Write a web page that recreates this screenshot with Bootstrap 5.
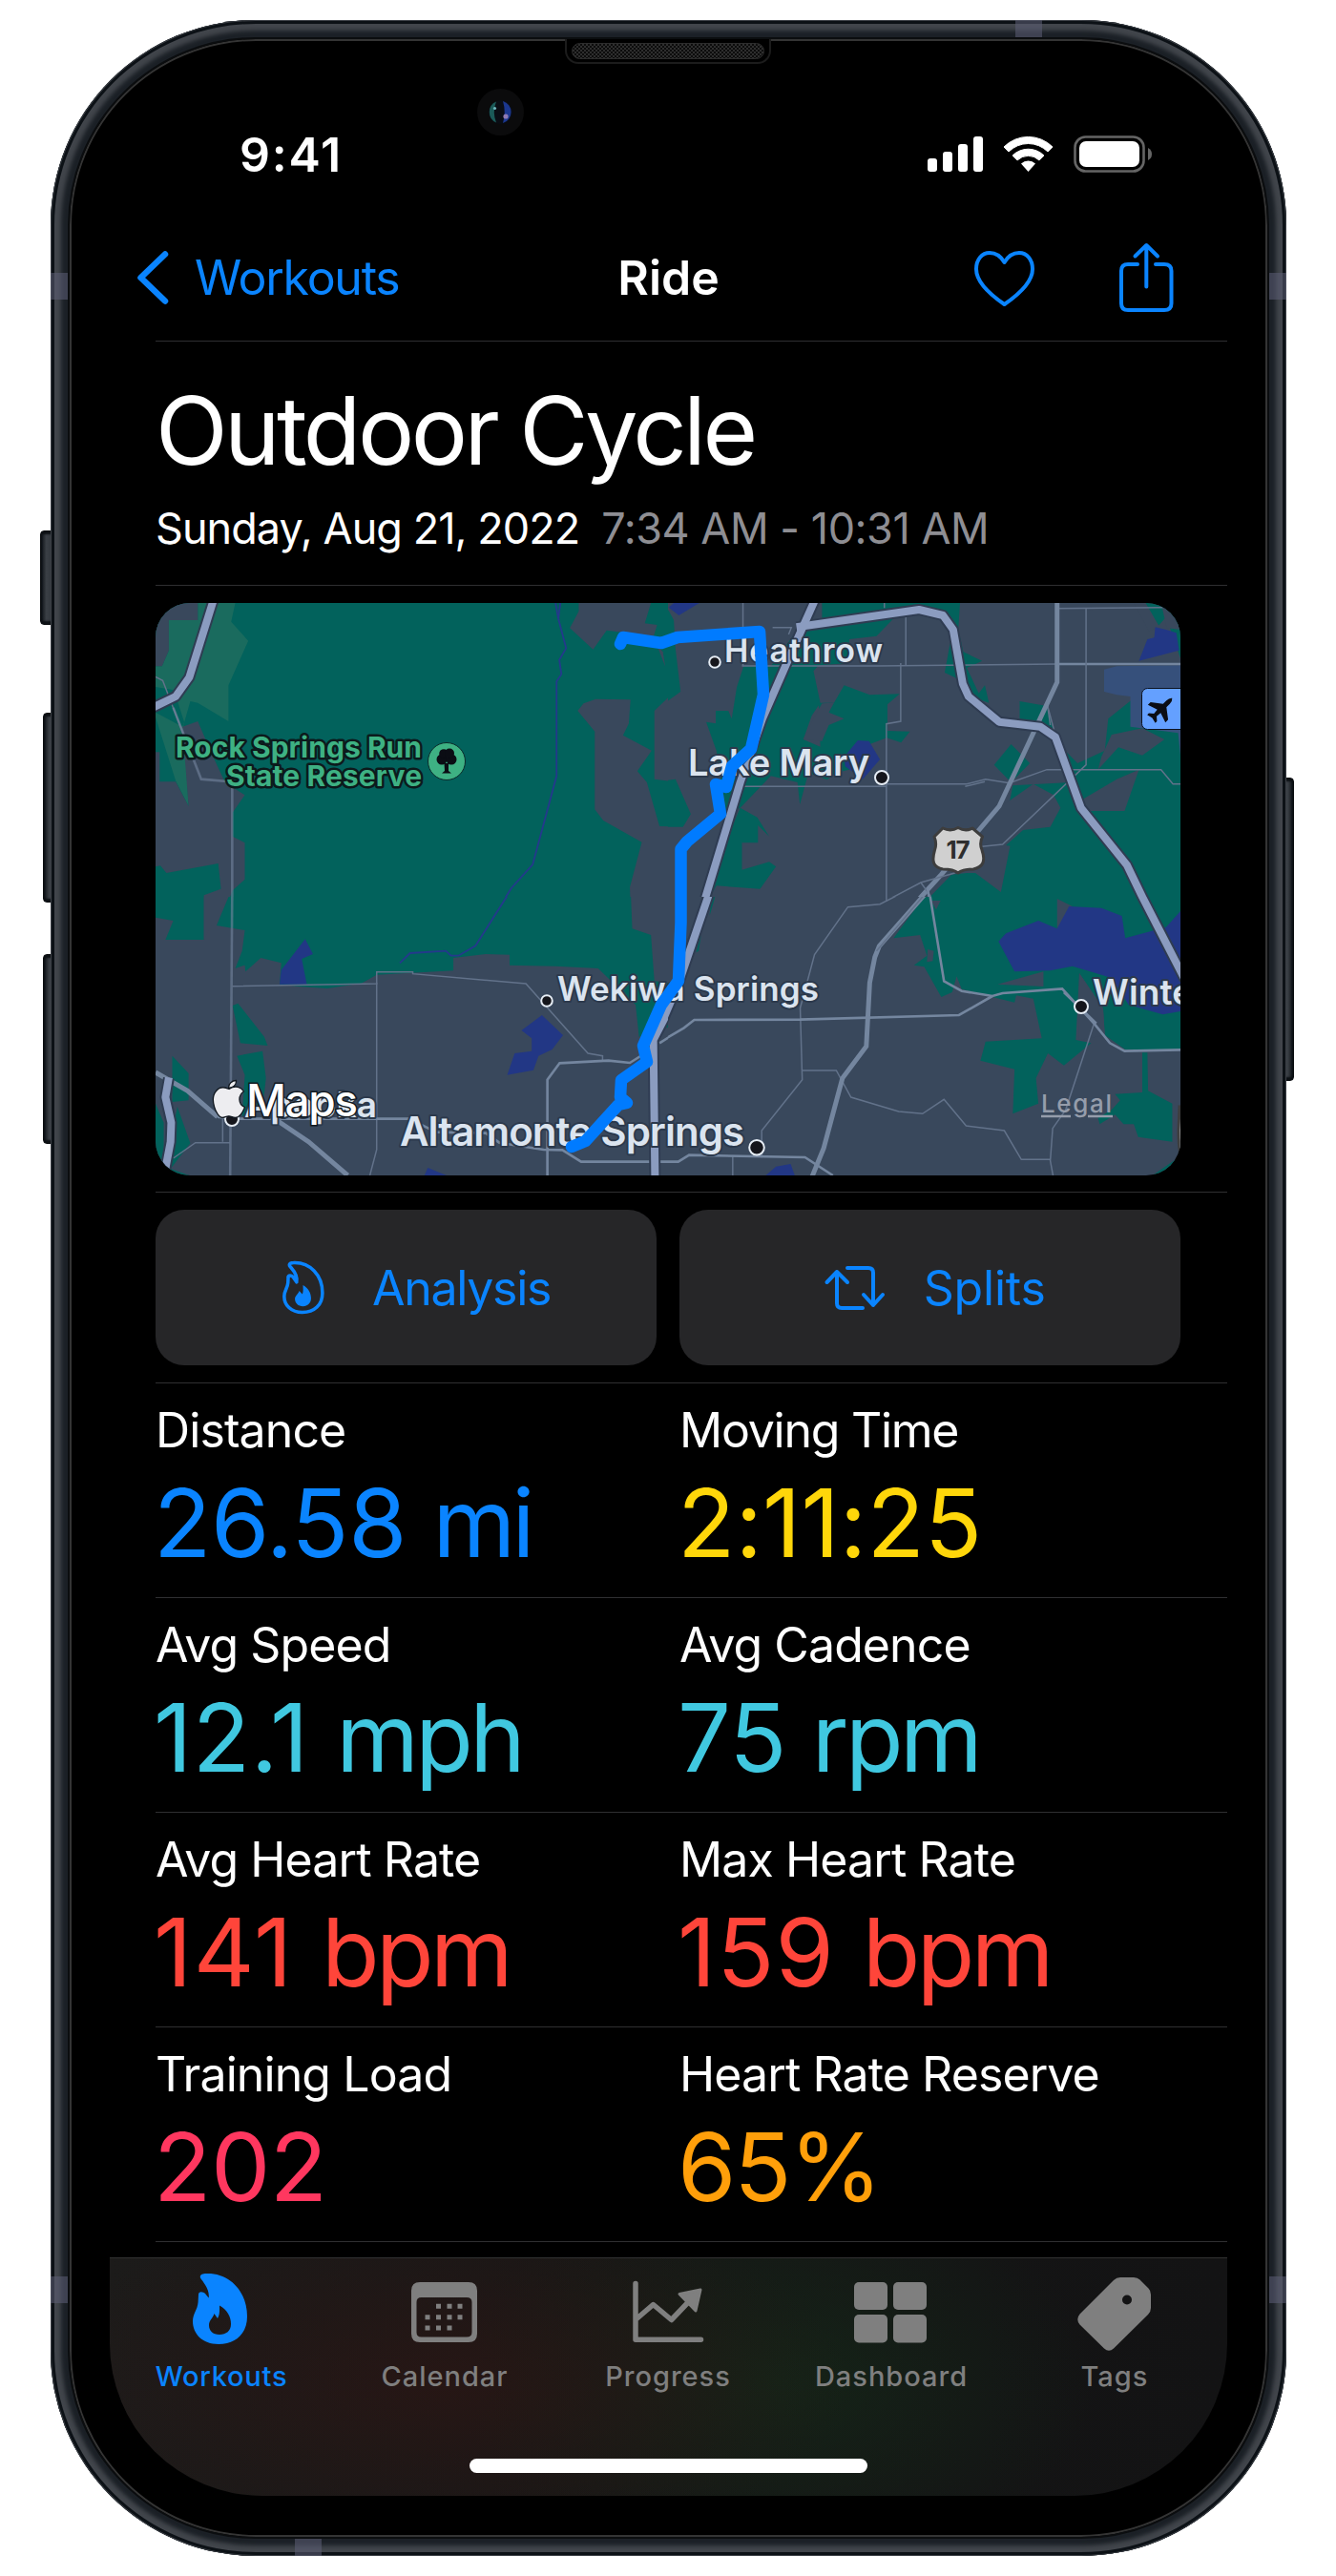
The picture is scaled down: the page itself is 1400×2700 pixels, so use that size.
<!DOCTYPE html>
<html lang="en">
<head>
<meta charset="utf-8">
<meta name="viewport" content="width=device-width, initial-scale=1">
<title>Ride – Outdoor Cycle</title>
<link href="https://cdn.jsdelivr.net/npm/bootstrap@5.3.0/dist/css/bootstrap.min.css" rel="stylesheet">
<style>
  :root { --ios-blue: #0a84ff; --hairline: #2f2f31; }
  body { background: #fff; font-family: Inter, "Liberation Sans", sans-serif; color: #fff; font-kerning: normal; }
  svg { display: block; flex: none; }

  /* device */
  .phone { width: 1295px; height: 2658px; margin: 21px 0 21px 53px; border-radius: 215px; padding: 18px;
    background: #1b2026;
    box-shadow: inset 0 0 0 1px #3c4046, inset 0 0 0 4px #0c1116, inset 0 0 4px 11px #41454b; }
  .bezel { border-radius: 197px; border: 2px solid #0b0d0f; box-shadow: inset 0 0 0 2px #343434; background: #000; }
  .side-key { position: absolute; z-index: -1; background: linear-gradient(90deg, #0c1014, #3a3f45 35%, #2b3036); border: 1px solid #0a0d10; border-radius: 4px; box-shadow: inset 0 3px 2px #0c1014, inset 0 -3px 2px #0c1014; }
  .key-mute { left: -11px; top: 535px; width: 18px; height: 99px; }
  .key-up { left: -8px; top: 726px; width: 18px; height: 199px; }
  .key-down { left: -8px; top: 979px; width: 18px; height: 199px; }
  .key-power { right: -8px; top: 794px; width: 18px; height: 318px; transform: scaleX(-1); }
  .antenna { position: absolute; background: #5c5f76; opacity: .55; }
  .antenna-v { width: 18px; height: 28px; }
  .antenna-h { width: 28px; height: 18px; }
  .speaker { position: absolute; left: 539px; top: 20px; width: 216px; height: 26px; border: 2px solid #1c1c1c; border-top: 0; border-radius: 0 0 14px 14px; background: #000; padding: 4px 5px; }
  .grille { height: 17px; border: 1px solid #2c2c2c; border-radius: 9px; background: repeating-conic-gradient(#2e2e2e 0 25%, #0c0c0c 0 50%) 0 0 / 4px 4px; }
  .lens { position: absolute; left: 447px; top: 72px; }

  /* screen */
  .screen { padding: 0 42px; }
  .status { height: 210px; padding: 91px 75px 0 136px; }
  .clock { font-size: 50px; font-weight: 600; line-height: 60px; letter-spacing: 1.8px; }
  .top-nav { height: 80px; padding: 0 53px 0 28px; font-size: 50px; line-height: 60px; }
  .back { color: var(--ios-blue); letter-spacing: -1.25px; gap: 25px; }
  .nav-actions { gap: 80px; }
  .inset { margin-left: 48px; }
  .rule { height: 1px; background: var(--hairline); }
  .h-title { font-size: 99px; line-height: 110px; letter-spacing: -3.6px; font-weight: 400; margin: 38px 0 18px; }
  .when { font-size: 45px; line-height: 60px; margin-bottom: 29px; gap: 23px; white-space: pre; }
  .when .day { letter-spacing: -.95px; }
  .when .span { letter-spacing: -.45px; color: #8e8e93; }
  .map { width: 1074px; height: 600px; border-radius: 36px; overflow: hidden; margin: 18px 0 17px; }
  .actions { width: 1074px; margin: 18px 0; gap: 24px; }
  .action { height: 163px; border: 0; border-radius: 30px; background: #262628; color: var(--ios-blue); font-size: 50px; line-height: 60px; padding: 0; }
  .action:hover { background: #2c2c2e; color: var(--ios-blue); }
  .a1 { padding-left: 132px; gap: 50px; letter-spacing: -1.3px; }
  .a2 { padding-left: 151px; gap: 39px; letter-spacing: -.2px; }
  .metrics { height: 225px; border-bottom: 1px solid var(--hairline); padding-top: 19px; }
  .metric { width: 549px; }
  .metric dt { font-size: 50px; line-height: 60px; font-weight: 400; letter-spacing: -.9px; margin-bottom: 12px; }
  .metric dd { font-size: 99px; line-height: 110px; margin: 0 0 0 -2px; letter-spacing: 0; white-space: nowrap; }
  .metric dd .unit { letter-spacing: -3.6px; }

  .tabs { height: 250px; margin-top: 16px; border-top: 1px solid #313131; border-radius: 0 0 160px 160px; position: relative;
    background: radial-gradient(430px 190px at 350px 130px, rgba(42,22,20,.8), transparent), radial-gradient(330px 210px at 700px 130px, rgba(20,38,24,.85), transparent), linear-gradient(90deg, #1c1b1a, #151515 55%, #131314); }
  .tab { width: 234px; padding-top: 14px; color: #7f7f7f; font-size: 29px; font-weight: 500; line-height: 36px; letter-spacing: 1px; text-decoration: none; }
  .tab span { margin-top: 8px; }
  .tab.current { color: var(--ios-blue); letter-spacing: .75px; }
  .home-bar { position: absolute; left: 377px; top: 210px; width: 417px; height: 15px; border-radius: 8px; background: #fff; }

  /* map */
  .gr { fill: #02625c; } .lg { fill: #1a6b5e; } .sl { fill: #39485c; } .wa { fill: #223785; } .ap { fill: #36507b; }
  .map path, .map polyline { vector-effect: non-scaling-stroke; }
  .rd { fill: none; stroke: #62728a; stroke-width: 1.5; }
  .md { fill: none; stroke: #74869f; stroke-width: 2.6; }
  .mj { fill: none; stroke: #74869f; stroke-width: 5; }
  .hc { fill: none; stroke: #2f3c52; stroke-width: 12; stroke-linejoin: round; }
  .hw { fill: none; stroke: #8b9cc0; stroke-width: 8; stroke-linejoin: round; }
  .cr { fill: none; stroke: #24398c; stroke-width: 1.8; }
  .place { fill: #dbe4ef; stroke: #2c394c; stroke-width: 4; paint-order: stroke; stroke-linejoin: round; font-weight: 600; }
  .park { fill: #3eb183; stroke: #0c1a1c; stroke-width: 5; paint-order: stroke; stroke-linejoin: round; font-weight: 700; font-size: 30px; }
  .dots circle { fill: #15161c; stroke: #e6edf5; stroke-width: 2; }
</style>
</head>
<body>
<div class="phone position-relative">
  <i class="side-key key-mute"></i><i class="side-key key-up"></i><i class="side-key key-down"></i><i class="side-key key-power"></i>
  <i class="antenna antenna-v" style="left:0;top:265px"></i><i class="antenna antenna-v" style="right:0;top:265px"></i>
  <i class="antenna antenna-v" style="left:0;top:2365px"></i><i class="antenna antenna-v" style="right:0;top:2365px"></i>
  <i class="antenna antenna-h" style="left:1011px;top:0"></i><i class="antenna antenna-h" style="left:256px;bottom:0"></i>

  <div class="bezel h-100">
    <div class="speaker"><div class="grille"></div></div>
    <svg class="lens" width="49" height="49" viewBox="0 0 49 49">
      <circle cx="24.500" cy="24.500" r="24.500" fill="#0b0b0c"/><circle cx="24.500" cy="24.500" r="12.500" fill="#0a0d14"/>
      <path d="M20 13.500A12 12 0 0 0 20 35.500A30 30 0 0 1 20 13.500Z" fill="#1b5a58"/>
      <path d="M27 13A12 12 0 0 1 27 36A40 40 0 0 0 27 13Z" fill="#1b378f"/>
      <circle cx="18.500" cy="20.500" r="1.600" fill="#6fb6bd"/><circle cx="30" cy="29" r="2.600" fill="#8f7ab4"/>
    </svg>

    <div class="screen">
      <div class="status d-flex justify-content-between align-items-start">
        <div class="clock">9:41</div>
        <svg width="245" height="60" viewBox="965 132 245 60">
          <g fill="#fff"><rect x="971" y="166" width="10" height="14" rx="3"/><rect x="987" y="159" width="10" height="21" rx="3"/><rect x="1003" y="151" width="10" height="29" rx="3"/><rect x="1019" y="143" width="10" height="37" rx="3"/></g>
          <path d="M1051 154A36 36 0 0 1 1102 154L1097 159A29 29 0 0 0 1056 159Z" fill="#fff" stroke="#fff" stroke-linejoin="round"/>
          <path d="M1060 163A23.500 23.500 0 0 1 1093 163L1088 168A16.500 16.500 0 0 0 1065 168Z" fill="#fff" stroke="#fff" stroke-linejoin="round"/>
          <path d="M1069 171.500A11 11 0 0 1 1084 171.500L1076.500 180Z" fill="#fff"/>
          <rect x="1125.500" y="143.500" width="72" height="36" rx="11" fill="none" stroke="#656565" stroke-width="2.600"/>
          <rect x="1130" y="148" width="63" height="27" rx="7" fill="#fff"/><path d="M1202 155Q1206 157 1206 161.500Q1206 166 1202 168Z" fill="#656565"/>
        </svg>
      </div>

      <nav class="top-nav d-flex align-items-center">
        <a class="back d-flex align-items-center text-decoration-none w-50" href="#">
          <svg width="36" height="60" viewBox="0 0 36 60"><path d="M30 5.500L4.500 30L30 54.500" fill="none" stroke="#0a84ff" stroke-width="6.500" stroke-linecap="round" stroke-linejoin="round"/></svg>
          <span>Workouts</span>
        </a>
        <div class="fw-semibold position-absolute start-50 translate-middle-x">Ride</div>
        <div class="nav-actions d-flex align-items-center justify-content-end w-50">
          <svg width="72" height="76" viewBox="0 -2 72 76"><path d="M35.500 64C18 52 6 40 6 27C6 17 12 10 20 10C27 10 32 14 35.500 20C39 14 44 10 51 10C59 10 65 17 65 27C65 40 53 52 35.500 64Z" fill="none" stroke="#0a84ff" stroke-width="4" stroke-linejoin="round"/></svg>
          <svg width="64" height="80" viewBox="0 0 64 80"><path d="M23 26H13Q6 26 6 33V67Q6 74 13 74H51Q58.500 74 58.500 67V33Q58.500 26 51 26H42M32.300 49.500V7M20.500 17.500L32.300 6L44 17.500" fill="none" stroke="#0a84ff" stroke-width="4" stroke-linecap="round" stroke-linejoin="round"/></svg>
        </div>
      </nav>

      <main class="inset">
        <div class="rule" style="margin-top:26px"></div>
        <h1 class="h-title">Outdoor Cycle</h1>
        <div class="when d-flex"><span class="day">Sunday, Aug 21, 2022</span><span class="span">7:34 AM - 10:31 AM</span></div>
        <div class="rule"></div>

        <div class="map">
          <svg width="1074" height="600" viewBox="163 632 1074 600" font-family="Inter, sans-serif">
            <rect x="163" y="632" width="1074" height="600" class="sl"/>

            <svg x="163" y="632" width="537" height="308" viewBox="36 36 1504 924" preserveAspectRatio="none">
              <rect class="gr" x="36" y="36" width="1504" height="924"/>
              <polygon class="lg" points="160,36 270,36 258,95 308,155 250,295 250,408 160,350 138,345 118,420 133,675 95,595 36,395 36,235 55,235 75,185 75,90 160,90"/>
              <polygon class="gr" points="36,300 90,310 120,410 115,425 36,380"/>
              <polygon class="sl" points="36,36 160,36 160,90 75,90 75,185 55,235 36,235"/>
              <polygon class="sl" points="115,425 160,408 205,520 240,600 298,640 262,695 262,770 298,790 298,905 262,940 245,990 178,990 178,955 228,935 220,855 68,885 50,862 36,865 36,505 48,505 48,598 95,598 133,675"/>
              <polygon class="sl" points="1278,36 1490,36 1472,100 1508,105 1498,140 1360,122 1320,182 1252,115 1278,62"/>
              <polygon class="sl" points="1275,375 1292,352 1328,338 1430,340 1425,415 1408,452 1492,500 1450,565 1478,600 1515,738 1568,740 1568,990 1430,990 1428,930 1463,788 1350,720 1325,685 1325,440"/>
              <polygon class="sl" points="1568,305 1500,375 1500,590 1555,598 1568,590"/>
              <polygon class="sl" points="1508,170 1532,236 1525,190"/>
              <polyline class="cr" points="1210,36 1218,85 1241,178 1221,215 1227,260 1213,283 1213,580 1143,858 1080,933 1035,1010"/>
              <polyline class="cr" points="1224,36 1218,85"/>
              <polyline class="rd" points="36,268 57,280 118,450"/>
              <polyline class="md" stroke-opacity=".6" points="88,365 170,590 261,598 261,980"/>
              <polyline class="hc" points="208,20 135,270 95,330 30,364"/><polyline class="hw" points="208,20 135,270 95,330 30,364"/>
            </svg>

            <svg x="700" y="632" width="537" height="308" viewBox="28 36 1504 924" preserveAspectRatio="none">
              <g class="gr">
                <polygon points="0,36 30,60 45,90 50,180 65,315 0,365"/>
                <polygon points="0,598 50,590 95,700 72,740 0,740"/>
                <polygon points="415,110 690,85 640,140 560,150 560,225 470,232 455,250 475,350 450,390 425,465 475,488 470,350 515,350 545,295 620,325 708,322 672,355 672,438 738,440 712,475 670,460 570,500 560,560 520,570 495,592 440,570 415,670 408,600 330,580 240,680 200,700 170,500 140,410 168,415 168,375 205,375 215,400 230,300 250,235 330,235"/>
                <polygon points="480,36 885,36 880,120 895,190 950,218 905,240 940,320 958,295 970,350 930,335 870,270 840,255 865,110 830,70 770,50 480,90"/>
                <polygon points="240,680 290,710 325,770 292,735 292,790 245,790 245,875 325,850 345,865 298,935 170,925 130,1000 110,1000"/>
                <polygon points="1060,345 1140,360 1160,440 1100,420 1060,400"/>
                <polygon points="1405,36 1532,36 1532,210 1490,80 1465,110 1440,110"/>
                <polygon points="1035,480 1090,540 1035,600 985,545"/>
                <polygon points="1040,610 1210,600 1175,480 1230,540 1310,500 1320,400 1390,340 1395,425 1532,430 1532,990 770,990 860,890 950,880 1005,800"/>
              </g>
              <g class="sl">
                <polygon points="1100,605 1160,640 1180,680 1150,740 1070,750 1020,798 1032,800 1005,945 930,885 880,885 950,760 1000,680"/>
                <polygon points="1290,560 1350,490 1420,515 1485,465 1420,430 1330,450 1300,520"/>
                <polygon points="1240,690 1250,650 1345,590 1410,560 1368,690"/>
                <polygon points="480,352 515,350 500,380 545,400 500,420 480,470 425,465 455,400"/>
                <polygon points="1170,965 1210,990 1170,990"/>
                <polygon points="1395,36 1430,36 1470,110 1440,125"/>
                <polygon points="1478,50 1532,50 1532,120 1492,115"/>
              </g>
              <polygon class="ap" points="1308,245 1345,235 1532,232 1532,515 1525,445 1385,425 1385,330 1345,325 1308,315"/>
              <g class="wa">
                <polygon points="30,50 45,36 120,36 60,75"/><polygon points="545,520 585,468 618,470 650,528 600,590 548,550"/>
                <polygon points="1435,150 1455,145 1458,112 1490,120 1520,130 1528,185 1410,218"/>
              </g>
              <polyline class="rd" points="248,36 248,234"/>
              <polyline class="rd" points="245,234 640,234 1170,228"/>
              <polyline class="md" points="1170,228 1532,228"/>
              <polyline class="rd" points="663,36 663,52"/><polyline class="rd" points="335,113 390,113 382,135"/>
              <polyline class="rd" points="726,80 726,233"/><polyline class="rd" points="711,225 711,408 669,416 669,968 "/>
              <polyline class="rd" points="1170,53 1480,50"/><polyline class="rd" points="1255,53 1255,545 1010,795 950,802"/>
              <polyline class="rd" points="250,613 669,613"/><polyline class="rd" points="669,605 905,605 960,590 1030,602 1140,560 1475,560 1510,605 1532,605"/>
              <polyline class="rd" points="900,613 958,598"/>
              <polyline class="rd" points="1142,360 1162,440"/><polyline class="rd" points="1142,360 1150,420"/>
              <polyline class="mj" points="1170,36 1170,285 1000,675 830,890 720,1020"/>
              <polyline class="rd" points="870,885 770,915 650,983 560,989"/><polyline class="rd" points="770,915 800,960"/>
              <polyline class="md" points="790,935 800,995"/>
              <polyline class="hc" points="462,20 395,180 305,400 240,600 130,990"/>
              <polyline class="hc" points="405,112 765,57 835,75 865,120 893,290 910,330 1000,410 1120,425 1165,458 1240,680 1375,860 1420,960 1434,991"/>
              <polyline class="hw" points="462,20 395,180 305,400 240,600 130,990"/>
              <polyline class="hw" points="405,112 765,57 835,75 865,120 893,290 910,330 1000,410 1120,425 1165,458 1240,680 1375,860 1420,960 1434,991"/>
            </svg>

            <svg x="163" y="940" width="537" height="292" viewBox="36 30 1504 876" preserveAspectRatio="none">
              <g class="gr">
                <polygon points="262,0 215,120 298,135 290,200 270,255 298,245 300,265 345,222 405,238 400,305 455,312 540,318 640,302 685,275 910,262 910,222 1005,210 1075,212 1075,245 1210,248 1335,255 1445,370 1455,470 1540,440 1540,300 1500,295 1490,150 1435,130 1430,0"/>
                <polygon points="36,0 262,0 178,30 178,165 65,165 88,105 36,95"/>
                <polygon points="262,372 278,365 355,470 365,498 285,490"/>
                <polygon points="275,530 350,515 360,600 350,700 290,720 298,590"/>
                <polygon points="85,530 133,585 133,670 85,675"/>
                <polygon points="36,680 60,740 60,900 36,900"/><polygon points="100,690 138,805 80,885 135,906 60,906"/>
              </g>
              <polygon class="sl" points="178,30 262,0 245,30 215,120 200,120 178,165"/>
              <g class="wa">
                <polygon points="475,163 498,210 465,225 480,305 400,305 405,260"/>
                <polygon points="1170,402 1232,465 1200,510 1160,530 1145,575 1068,590 1090,522 1140,515 1140,475 1110,450"/>
                <polygon points="835,882 890,906 825,906"/>
              </g>
              <polyline class="cr" points="1090,-10 975,184 925,215 903,215 888,200 783,207 753,238"/>
              <polyline class="md" stroke-opacity=".6" points="261,0 255,906"/>
              <polyline class="rd" points="261,311 685,303 685,266 791,266 791,272 1123,303 1305,522 1348,530 1348,545"/>
              <polyline class="rd" points="685,300 685,825 665,906"/>
              <polyline class="rd" points="255,803 153,803 88,852"/><polyline class="rd" points="233,725 233,800"/>
              <polyline class="md" points="1186,906 1186,605 1222,553 1365,545 1428,552 1490,510"/>
              <polyline class="mj" points="36,582 130,640 218,722"/>
              <polyline class="md" points="218,722 260,728 780,728 860,770 1005,773 1045,803 1175,825 1230,826 1285,863 1540,863"/>
              <polyline class="mj" points="395,735 485,800 600,906"/>
              <polyline class="md" points="1515,490 1568,455"/>
              <polyline class="hc" points="75,600 65,660 82,740 80,800 65,885"/><polyline class="hw" points="75,598 65,660 82,740 80,800 65,885"/>
              <polyline class="hc" points="1560,350 1497,480 1502,920"/><polyline class="hw" points="1560,350 1497,480 1502,920"/>
            </svg>

            <svg x="700" y="940" width="537" height="292" viewBox="28 30 1504 876" preserveAspectRatio="none">
              <g class="gr">
                <polygon points="690,160 800,0 1532,0 1532,510 1370,510 1310,465 1305,380 1235,270 1225,480 1270,490 1190,560 1143,522 1108,600 1115,680 1040,712 1045,572 945,545 960,485 1125,475 1100,350 1050,340 1045,362 980,345 890,320 875,280 862,330 830,345 780,250 750,245 788,215 768,150"/>
                <polygon points="1420,520 1435,520 1437,640 1508,680 1508,800 1408,785 1395,745 1365,745 1340,715 1295,745 1290,725 1330,700 1355,670 1340,650 1420,645"/>
                <polygon points="1450,906 1532,845 1532,906"/><polygon points="125,150 110,205 118,200"/><polygon points="170,15 150,90 155,30"/>
              </g>
              <g class="sl"><polygon points="995,305 1130,265 1130,312"/><polygon points="1170,36 1215,60 1170,130"/><polygon points="790,195 808,200 805,232 788,235"/><polygon points="800,42 828,42 815,70"/><polygon points="1235,270 1305,380 1310,465 1235,480"/></g>
              <g class="wa">
                <polygon points="998,170 1020,145 1115,105 1170,130 1205,60 1300,65 1360,90 1370,160 1490,125 1532,75 1532,390 1480,400 1380,370 1330,285 1215,248 1150,262 1045,265"/>
                <polygon points="315,906 345,878 388,870 400,906"/>
              </g>
              <polyline class="rd" points="669,0 669,45"/><polyline class="rd" points="748,0 650,53 556,62 458,212 416,380 422,605 303,765 303,850"/>
              <polyline class="rd" points="422,576 522,576 565,660 705,705 775,712 838,667 903,750 1015,765 1065,856 1150,856"/>
              <polyline class="rd" points="1278,430 1195,700 1157,758 1150,860 1158,906"/><polyline class="rd" points="218,845 218,906"/>
              <polyline class="md" points="0,490 75,442 105,417 416,416 882,402 980,342"/>
              <polyline class="md" points="793,0 838,295 890,326 980,342 1010,333 1185,319 1280,430 1325,490 1368,515 1532,511"/>
              <polyline class="md" points="1190,330 1285,428"/>
              <polyline class="md" points="10,863 58,863 90,842 430,849 512,906"/>
              <polyline class="mj" points="800,0 648,185 635,220 620,300 610,500 540,600 485,820 450,912"/>
              <polyline class="rd" points="795,5 640,200"/>
              <polyline class="hc" points="155,0 60,300 -20,500"/><polyline class="hw" points="155,0 60,300 -20,500"/>
              <polyline class="hc" points="1375,-70 1420,30 1545,290"/><polyline class="hw" points="1375,-70 1420,30 1545,290"/>
            </svg>

            <g class="dots">
              <circle cx="749" cy="694" r="5.800"/><circle cx="924" cy="815" r="7"/><circle cx="573" cy="1049" r="5.800"/><circle cx="793" cy="1202.700" r="7.800"/><circle cx="1133" cy="1055" r="7"/><circle cx="243" cy="1173" r="7"/>
            </g>
            <g class="place">
              <text x="759" y="694" font-size="34" textLength="166" lengthAdjust="spacing">Heathrow</text>
              <text x="721" y="813" font-size="38" textLength="190">Lake Mary</text>
              <text x="584" y="1049" font-size="35" textLength="274">Wekiwa Springs</text>
              <text x="419" y="1200.500" font-size="42" textLength="361">Altamonte Springs</text>
              <text x="1145" y="1052.500" font-size="37" textLength="120">Winter</text>
              <text x="256" y="1170.500" font-size="37" textLength="139">Apopka</text>
            </g>
            <g class="park"><text x="184" y="794" textLength="258">Rock Springs Run</text><text x="237" y="824" textLength="205">State Reserve</text></g>
            <circle cx="468" cy="798" r="19.500" fill="#3eb183" stroke="#0c2a2a"/>
            <path d="M465.500 800H470V808L473 810.500H463L466 808Z" fill="#0b0d14"/>
            <g fill="#0b0d14"><circle cx="463" cy="796" r="5.500"/><circle cx="473" cy="796" r="5.500"/><circle cx="465" cy="790" r="4.800"/><circle cx="471" cy="789.500" r="5"/></g>

            <path d="M988 868Q996 872 1004 867.500Q1012 872 1019 868L1029.500 877Q1026 884 1029 891C1033 903 1030 909 1020 911Q1009 911 1004 915Q999 911 988 911C978 909 976 903 979.500 891Q982 884 979 877Z" fill="#d0d0d0" stroke="#3d3d3d" stroke-width="3" stroke-linejoin="round"/>
            <text x="1004" y="899.500" font-size="26" font-weight="700" fill="#2e2e2e" text-anchor="middle" textLength="25">17</text>
            <rect x="1196.500" y="721.500" width="50" height="43" rx="6" fill="#64a0ff" stroke="#0d1320"/>
            <g transform="translate(1217 743) rotate(45)" fill="#0b0d14"><path d="M0 -16Q2.500 -14 2.500 -10V-5L13 3V7L2.500 3.500L2 9L6 12.500V15L0 13.500L-6 15V12.500L-2 9L-2.500 3.500L-13 7V3L-2.500 -5V-10Q-2.500 -14 0 -16Z"/></g>
            <path d="M1236 1160H1240V1208H1236.500Q1235 1200 1235 1185Z" fill="#d0d0d0" stroke="#3d3d3d" stroke-width="3"/>

            <text x="1091" y="1166" font-size="26" font-weight="500" fill="#959dab" textLength="74">Legal</text>
            <path d="M1091 1170H1122M1140 1170H1166" stroke="#959dab" stroke-width="2.500"/>
            <text x="258" y="1170" font-size="46" font-weight="500" fill="#fff" stroke="#111820" stroke-width="3" paint-order="stroke" textLength="117">Maps</text>
            <path d="M240 1141.500C247 1136.500 253 1140 255.500 1144C249.500 1148 249 1157 256.500 1160.500C254 1167 250 1171.500 246.500 1171.500C243.500 1171.500 242.500 1169.800 239.800 1169.800C237 1169.800 235.500 1171.500 232.800 1171.500C227 1171 219 1152 226.500 1143.500C230.500 1138.500 236 1139.500 240 1141.500ZM239.500 1140C239.500 1136 243 1132.500 247.500 1132.500C248 1137 244 1140.500 239.500 1140Z" fill="#ededf0" stroke="#111820" stroke-width="1.300"/>

            <polyline points="650,675 653,668 693,674 710,668 796,662 800,728 787,785 767,803 761,825 750,822 755,853 720,882 713.500,890 713.500,967 711,1028 693,1053 674,1096 678,1113 651,1132 650,1150 657,1156 648,1158 613.500,1196 599,1202" fill="none" stroke="#007bff" stroke-width="12.500" stroke-linecap="round" stroke-linejoin="round"/>
          </svg>
        </div>
        <div class="rule"></div>

        <div class="actions d-flex">
          <button class="btn action a1 flex-fill w-50 d-flex align-items-center" type="button">
            <svg width="45" height="57" viewBox="16 -1 64 80"><path d="M34 2C58 1 77 20 77 47C77 65 65 76 47 76C30 76 20 65 20 52C20 44 25 40 25.600 32L26 24C26 20 31 21 33 23L38.500 31C41 18 30 10 28 6.500C27 3.500 30 2 34 2Z" fill="none" stroke="#0a84ff" stroke-width="5" stroke-linejoin="round"/><path d="M48 35.500C56 40 60 47 60 55C60 62 55 67 48 67C41 67 36 62 36 56C36 51 41 49 42.500 44L47 49C49 45 48 40 48 35.500Z" fill="#0a84ff"/></svg>
            <span>Analysis</span>
          </button>
          <button class="btn action a2 flex-fill w-50 d-flex align-items-center" type="button">
            <svg width="66" height="50" viewBox="0 0 66 50"><path d="M14 8V41Q14 46 19 46H41M3.500 19L14 8L25 19M25 4H47Q52 4 52 9V43M42 32L52 43L62 32" fill="none" stroke="#0a84ff" stroke-width="4" stroke-linecap="round" stroke-linejoin="round"/></svg>
            <span>Splits</span>
          </button>
        </div>
        <div class="rule"></div>

        <div class="metrics d-flex">
          <dl class="metric m-0"><dt>Distance</dt><dd style="color:#0a84ff;letter-spacing:-.4px">26.58 <span class="unit">mi</span></dd></dl>
          <dl class="metric m-0"><dt style="letter-spacing:-1.25px">Moving Time</dt><dd style="color:#ffd60a;letter-spacing:.1px">2:11:25</dd></dl>
        </div>
        <div class="metrics d-flex">
          <dl class="metric m-0"><dt>Avg Speed</dt><dd style="color:#40c8e0;letter-spacing:.5px">12.1 <span class="unit">mph</span></dd></dl>
          <dl class="metric m-0"><dt>Avg Cadence</dt><dd style="color:#40c8e0;letter-spacing:-.8px">75 <span class="unit">rpm</span></dd></dl>
        </div>
        <div class="metrics d-flex">
          <dl class="metric m-0"><dt>Avg Heart Rate</dt><dd style="color:#ff453a;letter-spacing:1.4px">141 <span class="unit">bpm</span></dd></dl>
          <dl class="metric m-0"><dt>Max Heart Rate</dt><dd style="color:#ff453a;letter-spacing:1px">159 <span class="unit">bpm</span></dd></dl>
        </div>
        <div class="metrics d-flex">
          <dl class="metric m-0"><dt>Training Load</dt><dd style="color:#ff375f;letter-spacing:-.5px">202</dd></dl>
          <dl class="metric m-0"><dt>Heart Rate Reserve</dt><dd style="color:#ff9f0a;letter-spacing:-2.2px">65%</dd></dl>
        </div>
      </main>

      <nav class="tabs d-flex">
        <a class="tab current d-flex flex-column align-items-center" href="#">
          <svg width="100" height="84" viewBox="0 0 100 84" fill="currentColor"><path fill-rule="evenodd" d="M34 2C58 1 77 20 77 47C77 65 65 76 47 76C30 76 20 65 20 52C20 44 25 40 25.600 32L26 24C26 20 31 21 33 23L36.700 27.500C38 18 30 10 28 6.500C27 3.500 30 2 34 2ZM48 35.500C56 40 60 47 60 55C60 62 55 66 48 66C41 66 37 62 37 56C37 51 41 49 42.500 44L46 49C48.500 45 48 40 48 35.500Z"/></svg>
          <span>Workouts</span>
        </a>
        <a class="tab d-flex flex-column align-items-center" href="#">
          <svg width="100" height="84" viewBox="0 0 100 84" fill="currentColor"><path fill-rule="evenodd" d="M24 11H75Q84 11 84 20V65Q84 74 75 74H24Q15 74 15 65V20Q15 11 24 11ZM25.500 27Q20.500 27 20.500 32V63.500Q20.500 68.500 25.500 68.500H73Q78.500 68.500 78.500 63.500V32Q78.500 27 73 27Z"/><path d="M32 47.700h0M32 59h0M43.500 36.300h0M43.500 47.700h0M43.500 59h0M55 36.300h0M55 47.700h0M55 59h0M66 36.300h0M66 47.700h0" stroke="currentColor" stroke-width="5" stroke-linecap="square"/></svg>
          <span>Calendar</span>
        </a>
        <a class="tab d-flex flex-column align-items-center" href="#">
          <svg width="100" height="84" viewBox="0 0 100 84" fill="none" stroke="currentColor" stroke-width="5.500" stroke-linecap="round" stroke-linejoin="round"><path d="M16 12.500V71.200H84.500M17 49.500L34.500 34.500L53.600 50.500L75 28"/><path d="M62 23.500L84 19L79 41Z" fill="currentColor" stroke-width="3"/></svg>
          <span>Progress</span>
        </a>
        <a class="tab d-flex flex-column align-items-center" href="#">
          <svg width="100" height="84" viewBox="0 0 100 84" fill="currentColor"><rect x="11" y="11" width="35" height="29" rx="5"/><rect x="52" y="11" width="35" height="29" rx="5"/><rect x="11" y="45" width="35" height="29.500" rx="5"/><rect x="52" y="45" width="35" height="29.500" rx="5"/></svg>
          <span>Dashboard</span>
        </a>
        <a class="tab d-flex flex-column align-items-center" href="#">
          <svg width="100" height="84" viewBox="0 0 100 84" fill="currentColor"><path fill-rule="evenodd" d="M56 6H70Q74 6 76.500 8.500L85.500 17.500Q88 20 88 24V38Q88 42 85 45L49 80.500Q44 85 39 80.500L13.500 55.500Q9 50 13.500 44.500L49 9Q52 6 56 6ZM63 24.500A5 5 0 1 0 63 34.500A5 5 0 1 0 63 24.500Z"/></svg>
          <span>Tags</span>
        </a>
        <div class="home-bar"></div>
      </nav>
    </div>
  </div>
</div>
<script src="https://cdn.jsdelivr.net/npm/bootstrap@5.3.0/dist/js/bootstrap.bundle.min.js"></script>
</body>
</html>
